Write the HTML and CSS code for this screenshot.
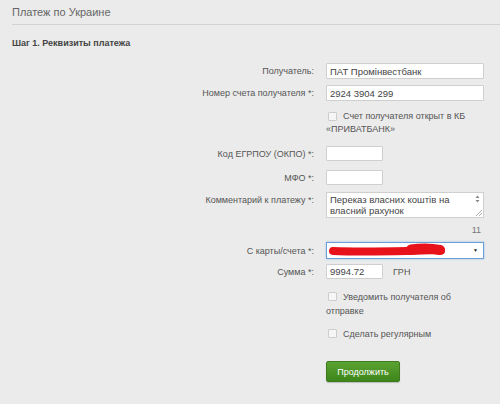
FILE: index.html
```html
<!DOCTYPE html>
<html>
<head>
<meta charset="utf-8">
<link rel="stylesheet" href="styles.css">
</head>
<body>
<div class="page">
  <h1 class="title">Платеж по Украине</h1>
  <h2 class="step">Шаг 1. Реквизиты платежа</h2>
  <form class="form">
    <div class="row r1">
      <label class="lbl">Получатель:</label>
      <div class="fld"><input class="inp wide" value="ПАТ Промінвестбанк"></div>
    </div>
    <div class="row r2">
      <label class="lbl">Номер счета получателя *:</label>
      <div class="fld"><input class="inp wide" value="2924 3904 299"></div>
    </div>
    <div class="row r3">
      <span></span>
      <div class="fld chk-text"><span class="box"></span>Счет получателя открыт в КБ «ПРИВАТБАНК»</div>
    </div>
    <div class="row r4">
      <label class="lbl">Код ЕГРПОУ (ОКПО) *:</label>
      <div class="fld"><input class="inp short"></div>
    </div>
    <div class="row r5">
      <label class="lbl">МФО *:</label>
      <div class="fld"><input class="inp short"></div>
    </div>
    <div class="row r6">
      <label class="lbl">Комментарий к платежу *:</label>
      <div class="fld">
        <div class="ta">
          <div class="ta-text">Переказ власних коштів на власний рахунок</div>
          <svg class="spin" width="5" height="8" viewBox="0 0 5 8"><path d="M0.5 3 L2.5 0.5 L4.5 3Z M0.5 5 L2.5 7.5 L4.5 5Z" fill="#888"/></svg>
          <svg class="grip" width="6" height="6" viewBox="0 0 6 6"><path d="M0 6 L6 0 M3 6 L6 3" stroke="#999" stroke-width="0.8"/></svg>
        </div>
        <div class="counter">11</div>
      </div>
    </div>
    <div class="row r7">
      <label class="lbl">С карты/счета *:</label>
      <div class="fld">
        <div class="sel">
          <svg class="scribble" width="122" height="15" viewBox="0 0 122 15"><path d="M6 8 C30 9 55 8.5 82 8 C92 7.5 100 7 114 7.5" stroke="#e8131a" stroke-width="8" stroke-linecap="round" fill="none"/><path d="M84 6.5 C94 5 104 5 113 7" stroke="#e8131a" stroke-width="10" stroke-linecap="round" fill="none"/></svg>
          <span class="arrow">▼</span>
        </div>
      </div>
    </div>
    <div class="row r8">
      <label class="lbl">Сумма *:</label>
      <div class="fld sum"><input class="inp short" value="9994.72"><span class="cur">ГРН</span></div>
    </div>
    <div class="row r9">
      <span></span>
      <div class="fld chk-text"><span class="box"></span>Уведомить получателя об отправке</div>
    </div>
    <div class="row r10">
      <span></span>
      <div class="fld chk-text"><span class="box"></span>Сделать регулярным</div>
    </div>
    <div class="row r11">
      <span></span>
      <div class="fld"><button type="button" class="btn">Продолжить</button></div>
    </div>
  </form>
</div>
</body>
</html>
```
FILE: styles.css
```css
html, body {
  margin: 0;
  padding: 0;
}
body {
  background: #ebebeb;
  font-family: "Liberation Sans", Arial, sans-serif;
  color: #555;
  width: 500px;
  height: 404px;
  overflow: hidden;
}
.page {
  padding-left: 12px;
}
.title {
  margin: 0;
  padding-top: 3px;
  font-size: 11px;
  font-weight: normal;
  color: #666;
  line-height: 18px;
  height: 21px;
  border-bottom: 1px solid #d2d2d2;
}
.step {
  margin: 12px 0 0 0;
  font-size: 9px;
  font-weight: bold;
  color: #444;
  line-height: 12px;
}
.form {
  margin-top: 14px;
  display: flex;
  flex-direction: column;
}
.row {
  display: grid;
  grid-template-columns: 302px 158px;
  column-gap: 12px;
  align-items: center;
}
.lbl {
  text-align: right;
  font-size: 9px;
  color: #555;
  line-height: 14px;
}
.fld {
  font-size: 9px;
}
.inp {
  box-sizing: border-box;
  height: 16px;
  border: 1px solid #cfcfcf;
  background: #fff;
  font-family: "Liberation Sans", Arial, sans-serif;
  font-size: 9.5px;
  color: #444;
  padding: 0 3px;
  margin: 0;
  display: block;
  border-radius: 1px;
}
.wide { width: 158px; }
.short { width: 57px; }
.r2 { margin-top: 6px; }
.r3 { margin-top: 9px; }
.chk-text {
  position: relative;
  line-height: 13px;
  color: #555;
  padding-left: 0;
  text-indent: 17px;
  width: 150px;
}
.r10 .chk-text { text-indent: 0; padding-left: 17px; }
.box {
  position: absolute;
  left: 2px;
  top: 2px;
  width: 7px;
  height: 7px;
  border: 1px solid #cdcdcd;
  background: #f6f6f6;
  border-radius: 1px;
}
.r4 { margin-top: 10px; }
.r4 .inp, .r5 .inp { height: 15px; }
.r5 { margin-top: 9px; }
.r6 { margin-top: 7px; align-items: start; }
.r6 .lbl { line-height: 16px; }
.ta {
  position: relative;
  box-sizing: border-box;
  width: 158px;
  height: 26px;
  border: 1px solid #cfcfcf;
  background: #fff;
  padding: 1px 14px 0 3px;
  font-size: 9.5px;
  line-height: 11px;
  color: #444;
}
.spin {
  position: absolute;
  right: 3px;
  top: 2px;
}
.grip {
  position: absolute;
  right: 1px;
  bottom: 1px;
}
.counter {
  text-align: right;
  font-size: 9px;
  color: #777;
  margin-top: 6px;
  padding-right: 3px;
  line-height: 12px;
}
.r7 { margin-top: 6px; }
.sel {
  position: relative;
  box-sizing: border-box;
  width: 158px;
  height: 17px;
  border: 1px solid #6a9ed6;
  box-shadow: 0 0 2px #9cc3ea;
  background: #fff;
}
.scribble {
  position: absolute;
  left: 0;
  top: 0;
}
.arrow {
  position: absolute;
  right: 5px;
  top: 4px;
  font-size: 5px;
  color: #222;
}
.r8 { margin-top: 5px; }
.r8 .inp { height: 15px; }
.sum {
  display: flex;
  align-items: center;
}
.cur {
  margin-left: 10px;
  color: #555;
}
.r9 { margin-top: 11px; }
.r9 .chk-text { line-height: 14px; }
.r10 { margin-top: 9px; }
.r10 .chk-text { line-height: 14px; }
.r11 { margin-top: 20px; }
.btn {
  width: 74px;
  height: 21px;
  border: 1px solid #3f7a1e;
  border-radius: 2px;
  background: linear-gradient(#5aa232, #3d8619);
  color: #fff;
  font-family: "Liberation Sans", Arial, sans-serif;
  font-size: 9px;
  padding: 0;
  box-shadow: 0 1px 1px rgba(0,0,0,0.2);
}
```
